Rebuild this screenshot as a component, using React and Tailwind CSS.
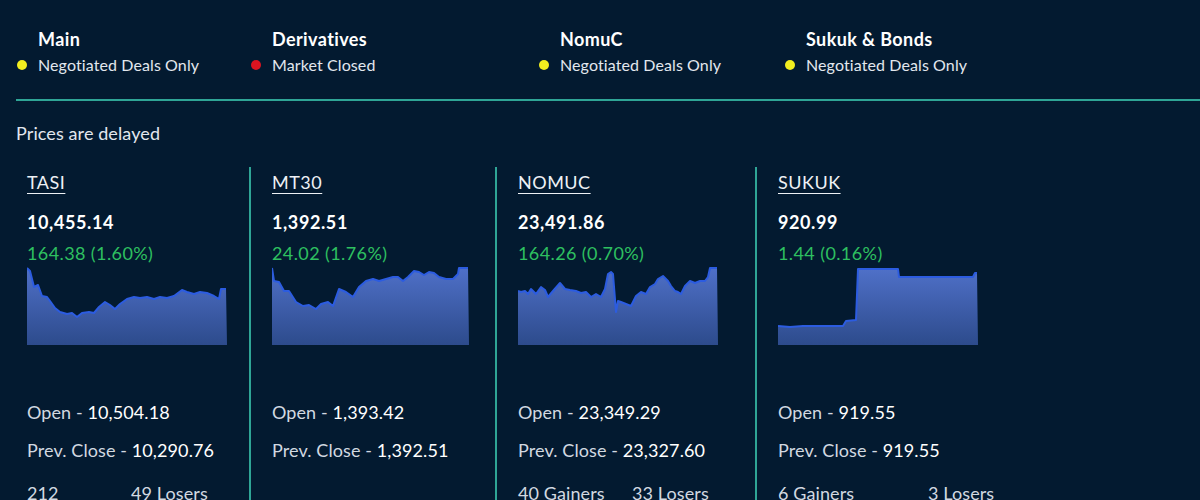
import React from "react";

const markets = [
  { title: "Main", status: "Negotiated Deals Only", dot: "bg-[#f2ee1f]", w: "w-[234px]" },
  { title: "Derivatives", status: "Market Closed", dot: "bg-[#dc1420]", w: "w-[288px]" },
  { title: "NomuC", status: "Negotiated Deals Only", dot: "bg-[#f2ee1f]", w: "w-[246px]" },
  { title: "Sukuk & Bonds", status: "Negotiated Deals Only", dot: "bg-[#f2ee1f]", w: "w-[260px]" },
];

const tasi = [[0,0],[3,3],[7,19],[11,17],[15,28],[20,29],[23,33],[28,40],[33,44],[40,46],[45,45],[50,49],[55,45],[62,44],[67,45],[72,39],[78,34],[83,37],[88,41],[93,36],[100,31],[107,29],[113,30],[120,29],[127,31],[133,29],[140,30],[147,28],[155,22],[160,24],[167,26],[173,24],[180,25],[187,28],[192,31],[194,21],[199,21]];
const mt30 = [[0,0],[2,13],[7,14],[12,23],[17,23],[24,34],[31,38],[37,37],[44,41],[49,36],[56,34],[61,38],[67,21],[74,24],[81,29],[87,19],[94,13],[101,11],[107,13],[114,11],[121,9],[126,9],[131,13],[136,9],[142,3],[147,4],[152,7],[157,4],[162,5],[167,9],[174,11],[181,11],[186,6],[187,0],[196,0]];
const nomuc = [[0,23],[3,24],[7,23],[10,26],[13,21],[18,26],[23,19],[27,22],[30,29],[35,23],[42,15],[47,21],[52,22],[58,23],[63,25],[68,24],[73,29],[78,26],[83,29],[87,21],[90,6],[93,4],[95,6],[98,44],[100,33],[103,34],[108,36],[113,38],[118,28],[123,24],[128,26],[132,19],[137,16],[140,11],[145,8],[150,13],[153,18],[157,23],[160,24],[163,26],[167,18],[172,13],[177,15],[182,13],[187,13],[190,9],[192,0],[199,0]];
const sukuk = [[0,58],[12,59],[25,58],[38,58],[65,58],[68,53],[78,52],[80,1],[120,1],[121,9],[195,9],[197,5],[199,5]];

const cols = [
  { name: "TASI", value: "10,455.14", change: "164.38 (1.60%)", pts: tasi, w: 200, open: "10,504.18", prev: "10,290.76", g: "212", l: "49 Losers", gw: "w-[104px]", cls: "w-[233px] pl-[11px]" },
  { name: "MT30", value: "1,392.51", change: "24.02 (1.76%)", pts: mt30, w: 197, open: "1,393.42", prev: "1,392.51", g: null, cls: "w-[246px] pl-[21px] border-l-2 border-[#2fa596]" },
  { name: "NOMUC", value: "23,491.86", change: "164.26 (0.70%)", pts: nomuc, w: 200, open: "23,349.29", prev: "23,327.60", g: "40 Gainers", l: "33 Losers", gw: "w-[114px]", cls: "w-[260px] pl-[21px] border-l-2 border-[#2fa596]" },
  { name: "SUKUK", value: "920.99", change: "1.44 (0.16%)", pts: sukuk, w: 200, open: "919.55", prev: "919.55", g: "6 Gainers", l: "3 Losers", gw: "w-[150px]", cls: "w-[260px] pl-[21px] border-l-2 border-[#2fa596]" },
];

function Chart({ pts, w, id }) {
  const h = 78;
  const line = pts.map((p, i) => `${i ? "L" : "M"}${p[0]},${p[1] + 1}`).join(" ");
  const area = `${line} L${w},${h} L0,${h} Z`;
  return (
    <svg width={w} height={h} viewBox={`0 0 ${w} ${h}`} className="block">
      <defs>
        <linearGradient id={id} x1="0" y1="0" x2="0" y2="1">
          <stop offset="0%" stopColor="#4f70c8" />
          <stop offset="100%" stopColor="#2d4b8c" />
        </linearGradient>
      </defs>
      <path d={area} fill={`url(#${id})`} />
      <path d={line} fill="none" stroke="#2c5ce0" strokeWidth="2" strokeLinejoin="round" />
    </svg>
  );
}

export default function App() {
  return (
    <div
      className="w-[1200px] h-[500px] overflow-hidden bg-[#031a30] text-white"
      style={{ fontFamily: "Lato, 'Noto Sans', sans-serif" }}
    >
      <div className="pl-[16px]">
        <div className="flex items-start pl-[1px] pt-[26px] h-[99px]">
          {markets.map((m) => (
            <div key={m.title} className={`${m.w} grid grid-cols-[10px_auto] content-start gap-x-[11px] items-center`}>
              <div />
              <div className="text-[18px] leading-[26px] font-bold tracking-[0.4px] text-white">{m.title}</div>
              <div className={`w-[10px] h-[10px] rounded-full ${m.dot}`} />
              <div className="text-[16px] leading-[26px] tracking-[0.1px] text-[#e2e7ee]">{m.status}</div>
            </div>
          ))}
        </div>
        <div className="h-[2px] bg-[#2fa596]" />
        <div className="mt-[20px] text-[18px] leading-[24px] tracking-[0.1px] text-[#e2e7ee]">Prices are delayed</div>
        <div className="flex mt-[22px] h-[340px]">
          {cols.map((c, i) => (
            <div key={c.name} className={`${c.cls} pt-[3px] flex flex-col`}>
              <div className="text-[18px] leading-[24px] tracking-[0.5px] text-[#eef1f5] underline underline-offset-[4px] decoration-1">{c.name}</div>
              <div className="mt-[16px] text-[18px] leading-[24px] font-bold tracking-[0.6px] text-white">{c.value}</div>
              <div className="mt-[7px] text-[18px] leading-[24px] tracking-[0.4px] text-[#2ec060]">{c.change}</div>
              <div className="mt-[2px]">
                <Chart pts={c.pts} w={c.w} id={`g${i}`} />
              </div>
              <div className="mt-[55px] text-[18px] leading-[24px] tracking-[0.1px] text-[#d2d9e1]">
                Open - <span className="text-white">{c.open}</span>
              </div>
              <div className="mt-[14px] text-[18px] leading-[24px] tracking-[0.1px] text-[#d2d9e1]">
                Prev. Close - <span className="text-white">{c.prev}</span>
              </div>
              {c.g && (
                <div className="mt-[19px] flex text-[18px] leading-[24px] tracking-[0.1px] text-[#d2d9e1]">
                  <span className={c.gw}>{c.g}</span>
                  <span>{c.l}</span>
                </div>
              )}
            </div>
          ))}
        </div>
      </div>
    </div>
  );
}
